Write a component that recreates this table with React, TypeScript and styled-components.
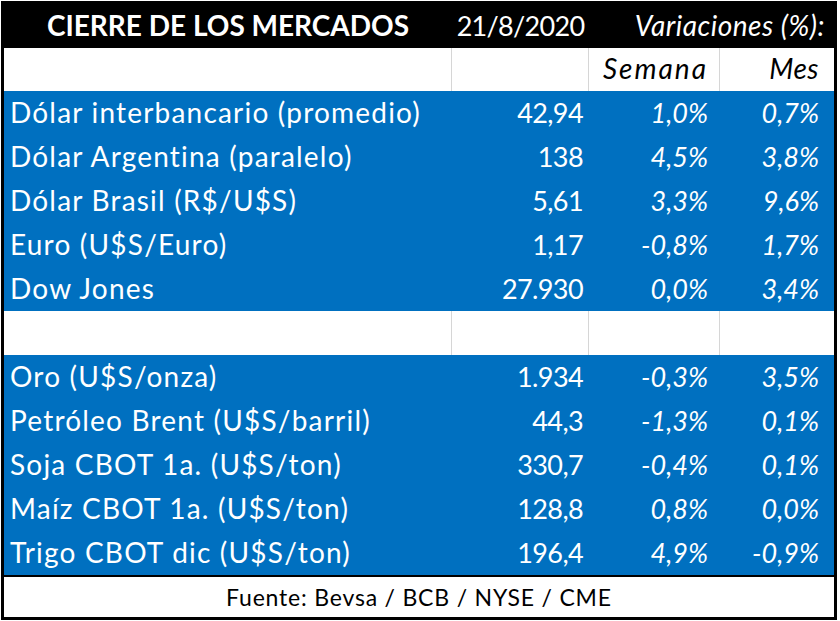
import React from "react";
import styled, { createGlobalStyle } from "styled-components";

const GlobalStyle = createGlobalStyle`
  body {
    margin: 0;
    background: #ffffff;
    font-family: Lato, "Liberation Sans", sans-serif;
  }
`;

const Sheet = styled.div`
  margin: 1px 0 0 1px;
  width: 830px;
  border: 3px solid #000;
`;

const Row = styled.div<{ $tone: "dark" | "light" | "blue"; $short?: boolean }>`
  display: grid;
  grid-template-columns: 448px 137px 131px 114px;
  height: ${(p) => (p.$short ? 43 : 44)}px;
  background: ${(p) => (p.$tone === "dark" ? "#000" : p.$tone === "blue" ? "#0070c0" : "#fff")};
  color: ${(p) => (p.$tone === "light" ? "#000" : "#fff")};
  font-size: 27px;
  line-height: 1;
`;

const Cell = styled.div<{
  $align?: "left" | "right" | "center";
  $italic?: boolean;
  $pad?: number;
  $grid?: boolean;
  $track?: number;
  $size?: number;
}>`
  display: flex;
  align-items: flex-end;
  justify-content: ${(p) => (p.$align === "left" ? "flex-start" : p.$align === "center" ? "center" : "flex-end")};
  padding: 0 ${(p) => p.$pad ?? 6}px 9px ${(p) => (p.$align === "left" ? 6 : 0)}px;
  font-style: ${(p) => (p.$italic ? "italic" : "normal")};
  font-size: ${(p) => p.$size ?? 27}px;
  letter-spacing: ${(p) => p.$track ?? 0}px;
  white-space: nowrap;
  border-right: ${(p) => (p.$grid ? "1px solid #d6d6d6" : "none")};
`;

const Title = styled(Cell)`
  font-weight: 700;
`;

const Span = styled(Cell)`
  grid-column: span 2;
`;

const Footer = styled.div`
  border-top: 2px solid #000;
  height: 40px;
  display: flex;
  align-items: center;
  justify-content: center;
  font-size: 23px;
  letter-spacing: 0.8px;
  color: #000;
`;

type Item = [string, string, string, string];

const first: Item[] = [
  ["Dólar interbancario (promedio)", "42,94", "1,0%", "0,7%"],
  ["Dólar Argentina (paralelo)", "138", "4,5%", "3,8%"],
  ["Dólar Brasil (R$/U$S)", "5,61", "3,3%", "9,6%"],
  ["Euro (U$S/Euro)", "1,17", "-0,8%", "1,7%"],
  ["Dow Jones", "27.930", "0,0%", "3,4%"],
];

const second: Item[] = [
  ["Oro (U$S/onza)", "1.934", "-0,3%", "3,5%"],
  ["Petróleo Brent (U$S/barril)", "44,3", "-1,3%", "0,1%"],
  ["Soja CBOT 1a. (U$S/ton)", "330,7", "-0,4%", "0,1%"],
  ["Maíz CBOT 1a. (U$S/ton)", "128,8", "0,8%", "0,0%"],
  ["Trigo CBOT dic (U$S/ton)", "196,4", "4,9%", "-0,9%"],
];

const DataRow = ({ item }: { item: Item }) => (
  <Row $tone="blue">
    <Cell $align="left" $size={28} $track={1.2}>{item[0]}</Cell>
    <Cell $track={-0.6}>{item[1]}</Cell>
    <Cell $italic $pad={12}>{item[2]}</Cell>
    <Cell $italic $pad={15}>{item[3]}</Cell>
  </Row>
);

export default function App() {
  return (
    <>
      <GlobalStyle />
      <Sheet>
        <Row $tone="dark">
          <Title $align="center" $pad={0} $size={28}>CIERRE DE LOS MERCADOS</Title>
          <Cell $align="center" $pad={0} $track={-0.7}>21/8/2020</Cell>
          <Span $italic $pad={9} $size={28} $track={0.5}>Variaciones (%):</Span>
        </Row>
        <Row $tone="light" $short>
          <Cell $grid />
          <Cell $grid />
          <Cell $italic $pad={11} $size={28} $track={2} $grid>Semana</Cell>
          <Cell $italic $pad={15} $size={28} $track={0.5}>Mes</Cell>
        </Row>
        {first.map((item) => (
          <DataRow key={item[0]} item={item} />
        ))}
        <Row $tone="light">
          <Cell $grid />
          <Cell $grid />
          <Cell $grid />
          <Cell />
        </Row>
        {second.map((item) => (
          <DataRow key={item[0]} item={item} />
        ))}
        <Footer>Fuente: Bevsa / BCB / NYSE / CME</Footer>
      </Sheet>
    </>
  );
}
